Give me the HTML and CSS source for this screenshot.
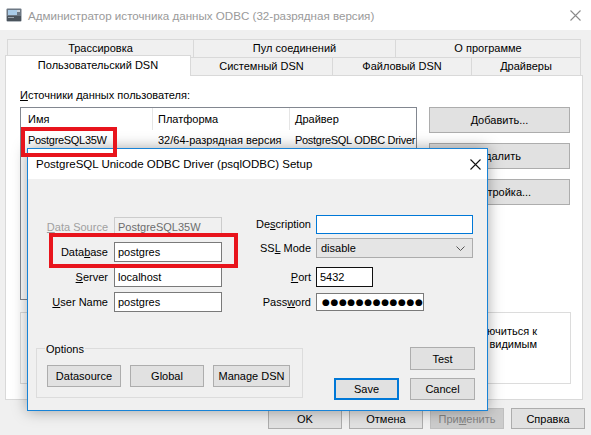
FILE: index.html
```html
<!DOCTYPE html>
<html lang="ru">
<head>
<meta charset="utf-8">
<title>ODBC</title>
<link rel="stylesheet" href="styles.css">
</head>
<body>
<div class="window">
  <div class="titlebar">
    <svg class="appicon" width="16" height="16" viewBox="0 0 16 16">
      <rect x="0.5" y="1.5" width="15" height="13" rx="1" fill="#6d7884"/>
      <rect x="2" y="3" width="9" height="5" fill="#a9cbe8"/>
      <rect x="1" y="9" width="14" height="5" fill="#4a535c"/>
      <rect x="2" y="10" width="6" height="1" fill="#9aa3ad"/>
      <rect x="11" y="3" width="3" height="2" fill="#c9d2db"/>
    </svg>
    <span class="wtitle">Администратор источника данных ODBC (32-разрядная версия)</span>
    <svg class="wclose" width="11" height="11" viewBox="0 0 11 11">
      <path d="M0.5 0.5 L10.5 10.5 M10.5 0.5 L0.5 10.5" stroke="#8a8a8a" stroke-width="1.1" fill="none"/>
    </svg>
  </div>

  <div class="tabrow upper">
    <div class="tab tw1">Трассировка</div>
    <div class="tab tw2">Пул соединений</div>
    <div class="tab tw3">О программе</div>
  </div>
  <div class="tabrow lower">
    <div class="tab sel">Пользовательский DSN</div>
    <div class="tab tw5">Системный DSN</div>
    <div class="tab tw6">Файловый DSN</div>
    <div class="tab tw7">Драйверы</div>
  </div>

  <div class="panel">
    <div class="caption"><u>И</u>сточники данных пользователя:</div>
    <div class="listrow">
      <div class="listbox">
        <div class="lhead">
          <div class="cell c1">Имя</div>
          <div class="cell c2">Платформа</div>
          <div class="cell c3">Драйвер</div>
        </div>
        <div class="lrow">
          <div class="cell c1">PostgreSQL35W</div>
          <div class="cell c2">32/64-разрядная версия</div>
          <div class="cell c3">PostgreSQL ODBC Driver</div>
        </div>
      </div>
      <div class="sidebtns">
        <div class="btn side"><u>Д</u>обавить...</div>
        <div class="btn side"><u>У</u>далить</div>
        <div class="btn side">Н<u>а</u>стройка...</div>
      </div>
    </div>
    <div class="infobox">
      <div class="infoline">Источник данных ODBC пользователя хранит сведения о том, как подключиться к</div>
      <div class="infoline">указанному поставщику данных. Источник данных пользователя является видимым</div>
    </div>
  </div>

  <div class="footer">
    <div class="btn foot">OK</div>
    <div class="btn foot">Отмена</div>
    <div class="btn foot disabled">При<u>м</u>енить</div>
    <div class="btn foot">Справка</div>
  </div>

  <div class="dialog">
    <div class="dtitlebar">
      <span class="dtitle">PostgreSQL Unicode ODBC Driver (psqlODBC) Setup</span>
      <svg class="dclose" width="11" height="11" viewBox="0 0 11 11">
        <path d="M0.5 0.5 L10.5 10.5 M10.5 0.5 L0.5 10.5" stroke="#111" stroke-width="1.1" fill="none"/>
      </svg>
    </div>
    <div class="dbody">
      <div class="form">
        <div class="lcol">
          <div class="lbl dis"><u>D</u>ata Source</div>
          <div class="field disfield">PostgreSQL35W</div>
          <div class="lbl">Data<u>b</u>ase</div>
          <div class="field">postgres</div>
          <div class="lbl"><u>S</u>erver</div>
          <div class="field">localhost</div>
          <div class="lbl"><u>U</u>ser Name</div>
          <div class="field">postgres</div>
        </div>
        <div class="rcol">
          <div class="rrow r1">
            <div class="lbl rl">De<u>s</u>cription</div>
            <div class="field focus wide"></div>
          </div>
          <div class="rrow r2">
            <div class="lbl rl">SS<u>L</u> Mode</div>
            <div class="select wide"><span>disable</span>
              <svg width="9" height="5" viewBox="0 0 9 5"><path d="M0.5 0.5 L4.5 4.5 L8.5 0.5" stroke="#555" fill="none"/></svg>
            </div>
          </div>
          <div class="rrow r3">
            <div class="lbl rl"><u>P</u>ort</div>
            <div class="field port">5432</div>
          </div>
          <div class="rrow r4">
            <div class="lbl rl">Pass<u>w</u>ord</div>
            <div class="field pwd">●●●●●●●●●●●●</div>
          </div>
        </div>
      </div>
      <div class="dbottom">
        <div class="group">
          <div class="gtitle">Options</div>
          <div class="gbtns">
            <div class="btn gb">Datasource</div>
            <div class="btn gb">Global</div>
            <div class="btn gb gbw">Manage DSN</div>
          </div>
        </div>
        <div class="dactions">
          <div class="btn db">Test</div>
          <div class="drow">
            <div class="btn db save">Save</div>
            <div class="btn db">Cancel</div>
          </div>
        </div>
      </div>
    </div>
  </div>

  <div class="mark mark1"></div>
  <div class="mark mark2"></div>
</div>
</body>
</html>
```

FILE: styles.css
```css
* { box-sizing: border-box; }
html, body { margin: 0; padding: 0; }
body {
  background: #f0f0f0;
  font-family: "Liberation Sans", Arial, sans-serif;
  font-size: 11px;
  color: #000;
}
u { text-decoration: underline; text-underline-offset: 1px; }

.window {
  position: relative;
  width: 591px;
  height: 435px;
  overflow: hidden;
  background: #f0f0f0;
}

/* title bar */
.titlebar {
  height: 30px;
  background: #fff;
  display: flex;
  align-items: center;
}
.appicon { margin-left: 6px; flex: none; }
.wtitle {
  margin-left: 6px;
  font-size: 11.6px;
  color: #9a9a9a;
  white-space: nowrap;
}
.wclose { margin-left: auto; margin-right: 10px; flex: none; }

/* tabs */
.tabrow { display: flex; position: relative; }
.tabrow.upper { margin-top: 9px; margin-left: 7px; height: 18px; }
.tabrow.lower { margin-left: 5px; height: 18px; align-items: flex-start; z-index: 2; }
.tab {
  border: 1px solid #d9d9d9;
  border-bottom: none;
  background: #f0f0f0;
  text-align: center;
  height: 18px;
  line-height: 17px;
  margin-left: -1px;
  white-space: nowrap;
}
.tab:first-child { margin-left: 0; }
.tw1 { width: 187px; }
.tw2 { width: 203px; }
.tw3 { width: 186px; }
.tab.sel {
  width: 186px;
  background: #fff;
  height: 21px;
  margin-top: -2px;
  line-height: 19px;
}
.tw5 { width: 143px; }
.tw6 { width: 140px; }
.tw7 { width: 110px; }

/* panel */
.panel {
  margin-left: 5px;
  width: 578px;
  height: 325px;
  border: 1px solid #d9d9d9;
  background: #fff;
  padding: 0 11px 0 14px;
}
.caption { margin-top: 12px; line-height: 15px; }
.listrow { display: flex; margin-top: 4px; }
.listbox {
  width: 397px;
  height: 193px;
  border: 1px solid #828790;
  background: #fff;
}
.lhead, .lrow { display: flex; }
.lhead { height: 22px; line-height: 22px; }
.lrow { height: 21px; line-height: 21px; }
.lrow .c1, .lrow .c3 { letter-spacing: -0.3px; }
.cell { padding-left: 5px; white-space: nowrap; }
.lhead .cell { border-right: 1px solid #e5e5e5; }
.lhead .c3 { border-right: none; }
.c1 { width: 132px; padding-left: 7px; }
.c2 { width: 137px; }
.c3 { flex: 1; }

.sidebtns {
  margin-left: 12px;
  width: 141px;
  display: flex;
  flex-direction: column;
  gap: 10px;
}
.btn {
  background: #e1e1e1;
  border: 1px solid #adadad;
  display: flex;
  align-items: center;
  justify-content: center;
  white-space: nowrap;
}
.btn.side { height: 26px; }

.infobox {
  margin-top: 12px;
  width: 551px;
  height: 72px;
  border: 1px solid #dcdcdc;
  padding: 12px 33px 0 0;
  text-align: right;
  line-height: 13px;
}
.infoline { white-space: nowrap; }

/* footer */
.footer {
  display: flex;
  justify-content: flex-end;
  gap: 7px;
  margin-top: 8px;
  padding-right: 6px;
}
.btn.foot { width: 74px; height: 21px; }
.btn.foot.disabled {
  background: #cccccc;
  border-color: #bfbfbf;
  color: #838383;
}

/* dialog */
.dialog {
  position: absolute;
  left: 27px;
  top: 148px;
  width: 461px;
  height: 263px;
  border: 1px solid #1883d7;
  background: #f0f0f0;
  box-shadow: 0 0 14px rgba(0, 0, 0, 0.35);
  z-index: 5;
}
.dtitlebar {
  height: 30px;
  background: #fff;
  display: flex;
  align-items: center;
  padding-left: 8px;
}
.dtitle { font-size: 11.5px; white-space: nowrap; }
.dclose { margin-left: auto; margin-right: 6px; }
.dbody { padding-right: 12px; }

.form { display: flex; align-items: flex-start; margin-top: 36px; }
.lcol {
  display: grid;
  grid-template-columns: 80px 108px;
  grid-auto-rows: 20px;
  column-gap: 6px;
  row-gap: 5px;
  padding-top: 2px;
}
.lbl { text-align: right; line-height: 20px; white-space: nowrap; }
.lbl.dis { color: #a0a0a0; }
.field {
  border: 1px solid #7a7a7a;
  background: #fff;
  padding-left: 3px;
  line-height: 18px;
  white-space: nowrap;
  overflow: hidden;
}
.field.disfield {
  border-color: #cccccc;
  background: #f0f0f0;
  color: #6d6d6d;
}
.rcol { display: flex; flex-direction: column; }
.rrow { display: flex; gap: 5px; }
.rl { width: 89px; }
.r1 { height: 19px; }
.r1 .lbl { line-height: 19px; }
.r2 { height: 20px; margin-top: 4px; }
.r3 { height: 20px; margin-top: 9px; }
.r4 { height: 18px; margin-top: 6px; }
.r4 .lbl { line-height: 18px; }
.wide { width: 157px; }
.field.focus { border-color: #0078d7; }
.select {
  border: 1px solid #acacac;
  background: #e5e5e5;
  display: flex;
  align-items: center;
  justify-content: space-between;
  padding: 0 7px 0 4px;
}
.field.port { width: 57px; border-color: #111; }
.field.pwd {
  width: 108px;
  line-height: 16px;
  font-family: "DejaVu Sans", sans-serif;
  font-size: 9px;
  letter-spacing: 0.6px;
  padding-left: 5px;
}

.dbottom { display: flex; align-items: flex-start; margin-top: 35px; }
.group {
  margin-left: 8px;
  margin-top: 1px;
  width: 267px;
  height: 50px;
  border: 1px solid #dcdcdc;
}
.gtitle {
  width: fit-content;
  margin: -7px 0 0 8px;
  padding: 0 1px;
  background: #f0f0f0;
  line-height: 14px;
}
.gbtns { display: flex; gap: 9px; margin: 9px 0 0 10px; }
.btn.gb { width: 74px; height: 22px; }
.btn.gbw { width: 77px; }
.dactions {
  margin-left: auto;
  display: flex;
  flex-direction: column;
  align-items: flex-end;
}
.btn.db { width: 65px; height: 23px; }
.drow { display: flex; gap: 11px; margin-top: 8px; }
.drow .btn.db { height: 22px; }
.btn.save { border: 2px solid #0078d7; }

/* red highlight overlays */
.mark {
  position: absolute;
  border: 4px solid #e8141c;
  z-index: 10;
}
.mark1 { left: 21px; top: 127px; width: 96px; height: 30px; }
.mark2 { left: 49px; top: 233px; width: 189px; height: 35px; }
```
